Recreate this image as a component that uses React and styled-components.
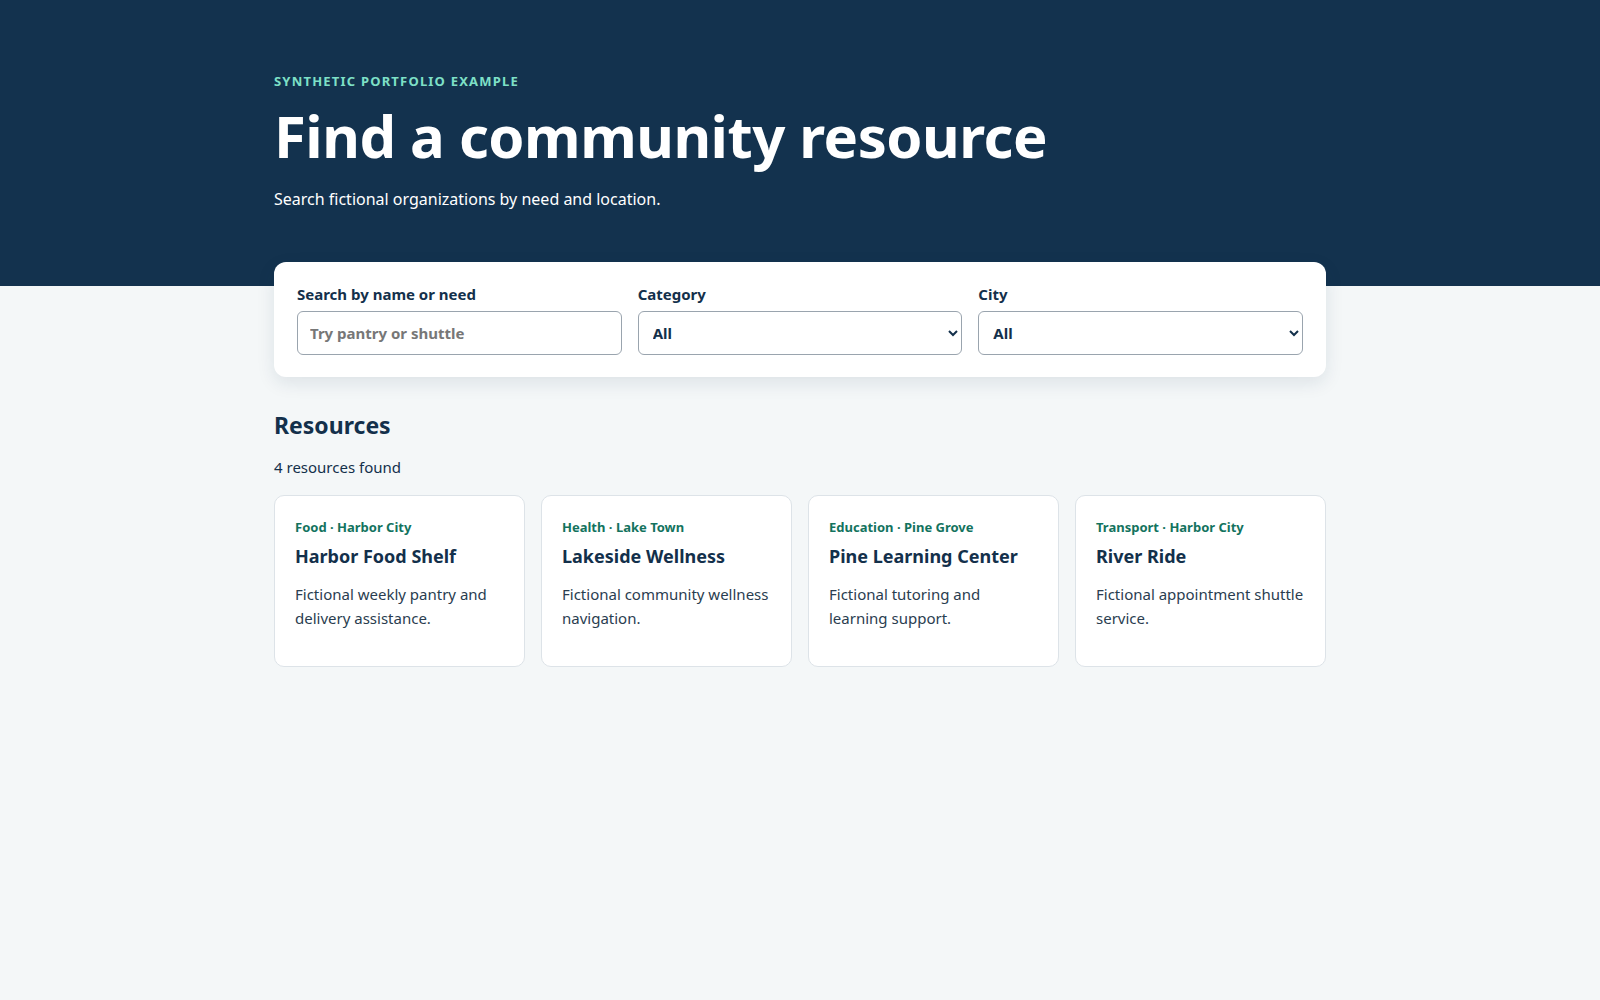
import React from 'react';
import styled, { createGlobalStyle } from 'styled-components';

const Global = createGlobalStyle`
  body { margin: 0; background: #f4f7f8; font-family: "Noto Sans", "Open Sans", sans-serif; color: #13304b; }
  * { box-sizing: border-box; }
`;

const resources = [
  { cat: 'Food', city: 'Harbor City', name: 'Harbor Food Shelf', desc: 'Fictional weekly pantry and delivery assistance.' },
  { cat: 'Health', city: 'Lake Town', name: 'Lakeside Wellness', desc: 'Fictional community wellness navigation.' },
  { cat: 'Education', city: 'Pine Grove', name: 'Pine Learning Center', desc: 'Fictional tutoring and learning support.' },
  { cat: 'Transport', city: 'Harbor City', name: 'River Ride', desc: 'Fictional appointment shuttle service.' },
];

export default function App() {
  return (
    <>
      <Global />
      <Hero>
        <Wrap>
          <Eyebrow>Synthetic portfolio example</Eyebrow>
          <Title>Find a community resource</Title>
          <Sub>Search fictional organizations by need and location.</Sub>
        </Wrap>
      </Hero>
      <Wrap>
        <Filters>
          <Field>
            <Label>Search by name or need</Label>
            <Input placeholder="Try pantry or shuttle" />
          </Field>
          <Field>
            <Label>Category</Label>
            <Select><option>All</option></Select>
          </Field>
          <Field>
            <Label>City</Label>
            <Select><option>All</option></Select>
          </Field>
        </Filters>
        <Heading>Resources</Heading>
        <Count>4 resources found</Count>
        <Grid>
          {resources.map((r) => (
            <Card key={r.name}>
              <Meta>{r.cat} · {r.city}</Meta>
              <Name>{r.name}</Name>
              <Desc>{r.desc}</Desc>
            </Card>
          ))}
        </Grid>
      </Wrap>
    </>
  );
}

const Hero = styled.header`
  background: #13324e;
  color: #fff;
  height: 286px;
  padding-top: 72px;
`;

const Wrap = styled.div`
  max-width: 1100px;
  margin: 0 auto;
  padding: 0 24px;
`;

const Eyebrow = styled.div`
  text-transform: uppercase;
  color: #7ee0c7;
  font-size: 13px;
  font-weight: 700;
  letter-spacing: 1.2px;
`;

const Title = styled.h1`
  margin: 14px 0 20px;
  font-size: 58px;
  line-height: 1.1;
  font-weight: 700;
  letter-spacing: -0.5px;
`;

const Sub = styled.p`
  margin: 0;
  font-size: 16px;
`;

const Filters = styled.section`
  margin-top: -24px;
  background: #fff;
  border-radius: 12px;
  box-shadow: 0 6px 18px rgba(19, 50, 78, 0.1);
  padding: 22px 23px;
  display: grid;
  grid-template-columns: repeat(3, 1fr);
  gap: 16px;
`;

const Field = styled.label`
  display: flex;
  flex-direction: column;
  gap: 7px;
`;

const Label = styled.span`
  font-size: 15px;
  font-weight: 700;
`;

const Input = styled.input`
  height: 44px;
  border: 1px solid #9aa4ae;
  border-radius: 6px;
  padding: 0 12px;
  font: inherit;
  font-size: 15px;
  font-weight: 700;
  &::placeholder { color: #777; }
`;

const Select = styled.select`
  height: 44px;
  border: 1px solid #9aa4ae;
  border-radius: 6px;
  padding: 0 10px;
  font: inherit;
  font-size: 15px;
  font-weight: 700;
  color: #13304b;
  background: #fff;
`;

const Heading = styled.h2`
  margin: 32px 0 0;
  font-size: 23px;
  font-weight: 700;
`;

const Count = styled.p`
  margin: 16px 0 18px;
  font-size: 15px;
`;

const Grid = styled.div`
  display: grid;
  grid-template-columns: repeat(4, 1fr);
  gap: 16px;
`;

const Card = styled.article`
  background: #fff;
  border: 1px solid #dde3e8;
  border-radius: 10px;
  padding: 22px 20px 36px;
`;

const Meta = styled.div`
  color: #13735e;
  font-size: 13px;
  font-weight: 700;
`;

const Name = styled.h3`
  margin: 8px 0 14px;
  font-size: 18px;
  font-weight: 700;
`;

const Desc = styled.p`
  margin: 0;
  font-size: 15px;
  line-height: 1.6;
  color: #2a3d50;
`;
